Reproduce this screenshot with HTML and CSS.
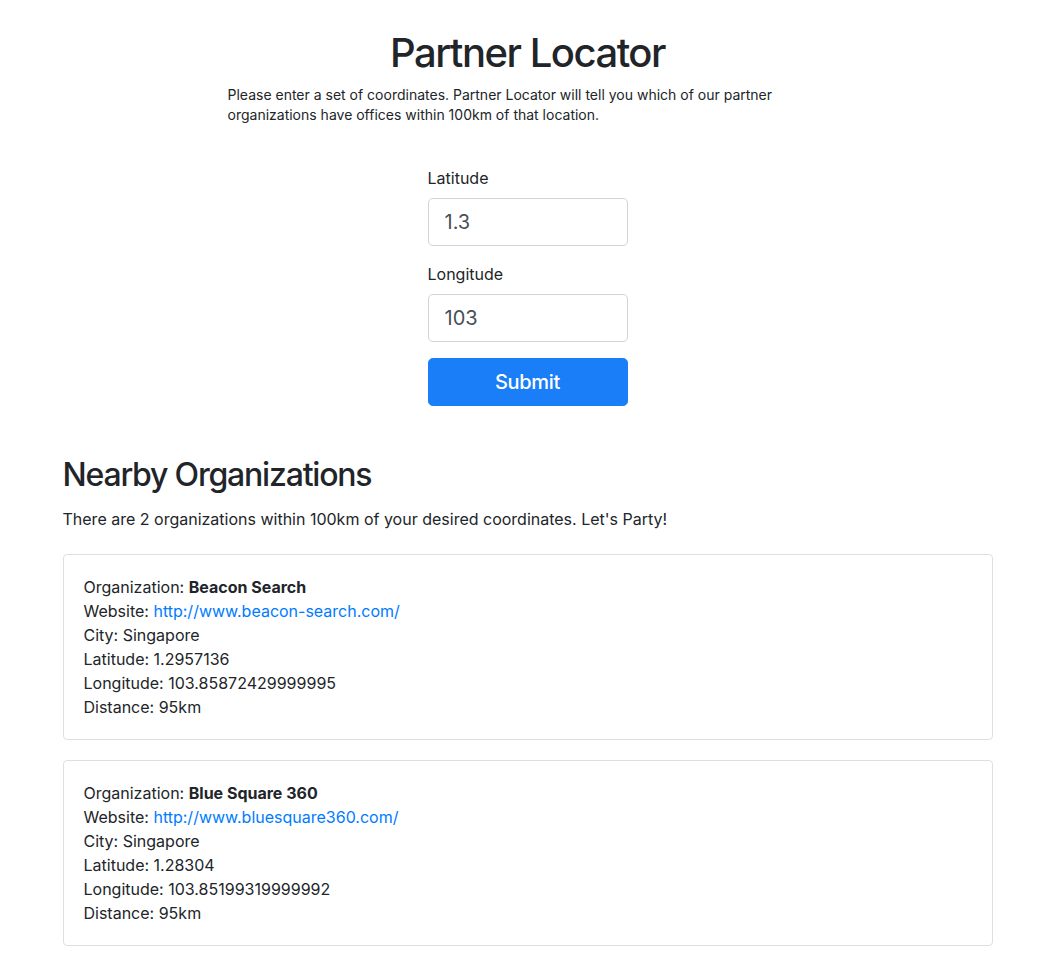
FILE: index.html
```html
<!DOCTYPE html>
<html lang="en">
<head>
<meta charset="utf-8">
<title>Partner Locator</title>
<link rel="stylesheet" href="styles.css">
</head>
<body>
<div class="container">
  <header class="intro">
    <h1 class="title">Partner Locator</h1>
    <p class="lead-text">Please enter a set of coordinates. Partner Locator will tell you which of our partner organizations have offices within 100km of that location.</p>
  </header>
  <form class="locator-form">
    <div class="form-group">
      <label class="form-label" for="lat">Latitude</label>
      <input class="form-control" id="lat" type="text" value="1.3">
    </div>
    <div class="form-group">
      <label class="form-label" for="lng">Longitude</label>
      <input class="form-control" id="lng" type="text" value="103">
    </div>
    <button class="btn-submit" type="button">Submit</button>
  </form>
  <section class="results">
    <h2 class="results-title">Nearby Organizations</h2>
    <p class="results-summary">There are 2 organizations within 100km of your desired coordinates. Let's Party!</p>
    <div class="card">
      <div class="card-body">
        <div>Organization: <strong>Beacon Search</strong></div>
        <div>Website: <a href="#">http://www.beacon-search.com/</a></div>
        <div>City: Singapore</div>
        <div>Latitude: 1.2957136</div>
        <div>Longitude: 103.85872429999995</div>
        <div>Distance: 95km</div>
      </div>
    </div>
    <div class="card">
      <div class="card-body">
        <div>Organization: <strong>Blue Square 360</strong></div>
        <div>Website: <a href="#">http://www.bluesquare360.com/</a></div>
        <div>City: Singapore</div>
        <div>Latitude: 1.28304</div>
        <div>Longitude: 103.85199319999992</div>
        <div>Distance: 95km</div>
      </div>
    </div>
  </section>
</div>
</body>
</html>
```

FILE: styles.css
```css
* { box-sizing: border-box; }
html, body { margin: 0; padding: 0; }
body {
  font-family: Inter, "Noto Sans", "Liberation Sans", sans-serif;
  font-size: 16px;
  line-height: 24px;
  color: #212529;
  background: #fff;
}
.container {
  max-width: 960px;
  margin: 0 auto;
  padding: 29px 15px 0;
}
.intro { text-align: center; }
.title {
  margin: 0 0 8px;
  font-size: 40px;
  line-height: 48px;
  font-weight: 500;
  letter-spacing: -1.5px;
}
.lead-text {
  width: 600px;
  margin: 0 auto;
  text-align: left;
  font-size: 14px;
  line-height: 20px;
}
.locator-form {
  width: 200px;
  margin: 41px auto 0;
}
.form-group { margin-bottom: 16px; }
.form-label {
  display: block;
  margin-bottom: 8px;
  font-size: 16px;
  line-height: 24px;
}
.form-control {
  display: block;
  width: 100%;
  height: 48px;
  padding: 8px 16px;
  font-family: inherit;
  font-size: 20px;
  line-height: 30px;
  color: #495057;
  background: #fff;
  border: 1px solid #ced4da;
  border-radius: 4.8px;
  outline: none;
}
.btn-submit {
  display: block;
  width: 100%;
  height: 48px;
  padding: 8px 16px;
  font-family: inherit;
  font-size: 20px;
  line-height: 30px;
  font-weight: 500;
  letter-spacing: -0.3px;
  color: #fff;
  background: #1a7ef8;
  border: 1px solid #1a7ef8;
  border-radius: 4.8px;
}
.results { margin-top: 50px; }
.results-title {
  margin: 0 0 8px;
  font-size: 32px;
  line-height: 38px;
  font-weight: 500;
  letter-spacing: -1.2px;
}
.results-summary {
  margin: 0 0 23px;
  padding-top: 5px;
}
.card {
  border: 1px solid rgba(0,0,0,.125);
  border-radius: 4px;
  margin-bottom: 20px;
}
.card-body { padding: 20px; }
.card a { color: #007bff; text-decoration: none; }
.card strong { font-weight: 700; }
```
